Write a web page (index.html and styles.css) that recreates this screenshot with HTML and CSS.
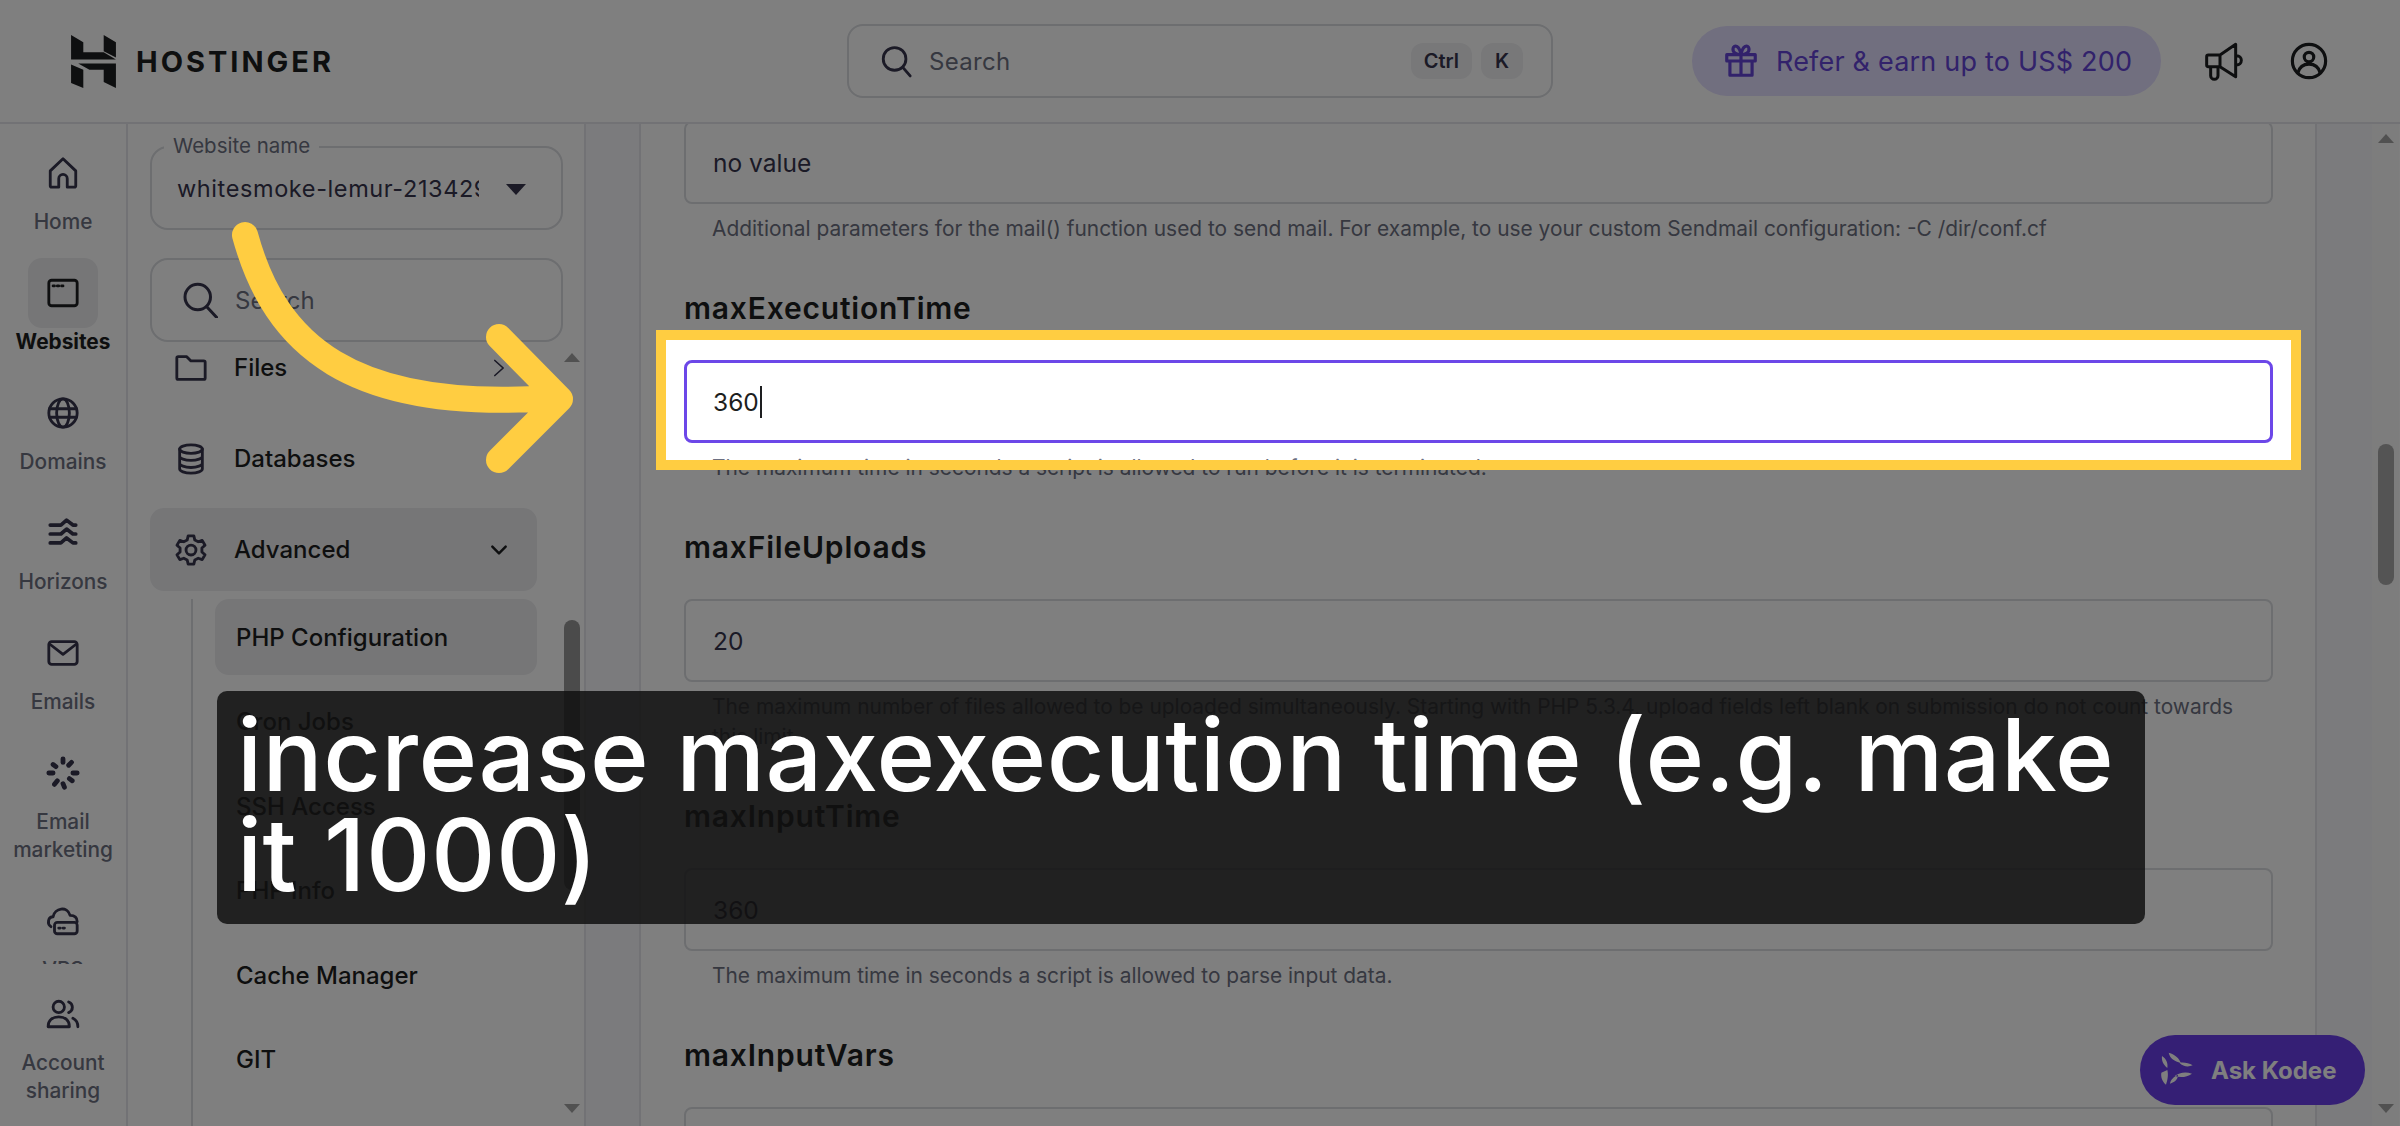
FILE: index.html
```html
<!DOCTYPE html>
<html lang="en">
<head>
<meta charset="utf-8">
<title>Hostinger PHP Configuration</title>
<link rel="stylesheet" href="styles.css">
</head>
<body>
<div class="page">
  <header class="topbar">
    <div class="brand">
      <svg class="brand-mark" viewBox="0 0 44 52"><path d="M0 0l12 7v10h20l12 7H0zM32 0l12 7v15l-12-6zM0 29l12 5v18L0 47zM7 28h37v24l-12-6V34H18z"/></svg>
      <span class="brand-name">HOSTINGER</span>
    </div>
    <div class="top-search">
      <svg class="i top-search-icon" viewBox="0 0 24 24"><circle cx="11" cy="10.500" r="8"/><path d="M16.800 16.500 22 22.500"/></svg>
      <span class="top-search-text">Search</span>
      <span class="key">Ctrl</span>
      <span class="key key-k">K</span>
    </div>
    <div class="refer">
      <svg class="i refer-icon" viewBox="0 0 24 24"><path d="M3 8h18v4H3zM5 12v9h14v-9M12 8v13M12 8C9 8 6.500 6.500 7 4s4-2 5 4c1-6 4.500-6.500 5-4s-2 4-5 4"/></svg>
      <span>Refer &amp; earn up to US$ 200</span>
    </div>
    <svg class="i top-megaphone" viewBox="0 0 180 156"><path d="M35 65a5 5 0 0 1 5-5H75L122 28V125L75 95H40a5 5 0 0 1-5-5zM75 60V95M47 95V122a11 11 0 0 0 22 0V95M125 62a14 14 0 0 1 0 28"/></svg>
    <svg class="i top-profile" viewBox="0 0 24 24"><circle cx="12" cy="12" r="10.500"/><circle cx="12" cy="9.500" r="3"/><path d="M5 19.500c1-4 4-5.500 7-5.500s6 1.500 7 5.500"/></svg>
  </header>

  <div class="workspace">
    <nav class="rail">
      <div class="rail-list">
        <div class="rail-item"><div class="rail-tile"><svg class="i" viewBox="0 0 24 24"><path d="M3 10.500 12 2l9 8.500V21a1 1 0 0 1-1 1h-5v-6a3 3 0 0 0-6 0v6H4a1 1 0 0 1-1-1z"/></svg></div><span>Home</span></div>
        <div class="rail-item active"><div class="rail-tile"><svg class="i" viewBox="0 0 24 24"><rect x="2" y="3" width="20" height="18" rx="2"/><path d="M5 7h1M8 7h1M11 7h1"/></svg></div><span>Websites</span></div>
        <div class="rail-item"><div class="rail-tile"><svg class="i" viewBox="0 0 24 24"><circle cx="12" cy="12" r="10"/><ellipse cx="12" cy="12" rx="4.500" ry="10"/><path d="M2.500 9h19M2.500 15h19"/></svg></div><span>Domains</span></div>
        <div class="rail-item"><div class="rail-tile"><svg class="i i-wave" viewBox="0 0 24 24"><path d="M3 6.400h7.500l4-3.500 4.500 3.500h2M3 12.700h7.500l4-3.500 4.500 3.500h2M3 19h7.500l4-3.500 4.500 3.500h2"/></svg></div><span>Horizons</span></div>
        <div class="rail-item"><div class="rail-tile"><svg class="i" viewBox="0 0 24 24"><rect x="2" y="4" width="20" height="16" rx="2"/><path d="m3 6 9 7 9-7"/></svg></div><span>Emails</span></div>
        <div class="rail-item"><div class="rail-tile"><svg class="i i-dash" viewBox="0 0 24 24"><path d="M12 2v2.500M18 4.500l-2 2M22 12h-3M18.500 17.500l-2-1.500M13 22l-1-2.500M6 20l2-2.500M2 12h3M5 6l2 1.500"/></svg></div><span>Email<br>marketing</span></div>
        <div class="rail-item"><div class="rail-tile"><svg class="i" viewBox="0 0 24 24"><path d="M3.500 16C.5 14 1.500 9 5 9c1-6 10-8 12-1 3 0 5 1.500 5 4.500"/><rect x="6" y="13" width="16" height="8" rx="2"/><path d="M9 17h1M12 17h1"/></svg></div><span>VPS</span></div>
      </div>
      <div class="rail-foot">
        <div class="rail-item"><div class="rail-tile"><svg class="i" viewBox="0 0 24 24"><circle cx="9" cy="7" r="4"/><path d="M1.500 21c0-5 3.500-7 7.500-7s7.500 2 7.500 7zM16 3.500a4 4 0 0 1 0 7.500M19 15c2 1 3.500 3 3.500 6"/></svg></div><span>Account<br>sharing</span></div>
      </div>
    </nav>

    <aside class="sidebar">
      <div class="side-field side-site">
        <span class="side-legend">Website name</span>
        <span class="side-site-value">whitesmoke-lemur-213429</span>
        <span class="caret-down"></span>
      </div>
      <div class="side-field side-search">
        <svg class="i side-search-icon" viewBox="0 0 24 24"><circle cx="10.500" cy="10" r="8.500"/><path d="M16.500 16.500 23 23.500"/></svg>
        <span>Search</span>
      </div>
      <div class="side-scroll">
        <div class="side-list">
          <div class="side-row"><svg class="i row-icon" viewBox="0 0 24 24"><path d="M2 5a1 1 0 0 1 1-1h6l3 3h9a1 1 0 0 1 1 1v11a1 1 0 0 1-1 1H3a1 1 0 0 1-1-1z"/></svg><span>Files</span><svg class="i row-chev" viewBox="0 0 24 24"><path d="m7 3 10 9-10 9"/></svg></div>
          <div class="side-row"><svg class="i row-icon" viewBox="0 0 24 24"><ellipse cx="12" cy="5" rx="8" ry="3"/><path d="M4 5v14c0 1.500 3.500 3 8 3s8-1.500 8-3V5M4 10c0 1.500 3.500 3 8 3s8-1.500 8-3M4 15c0 1.500 3.500 3 8 3s8-1.500 8-3"/></svg><span>Databases</span></div>
          <div class="side-row side-row-open"><svg class="i row-icon" viewBox="0 0 24 24"><circle cx="12" cy="12" r="3.500"/><path d="M10 2h4l.7 3 2.400 1.200 2.800-1 2 3.400-2.200 2v2.800l2.200 2-2 3.400-2.800-1-2.400 1.200-.7 3h-4l-.7-3-2.400-1.200-2.800 1-2-3.400 2.200-2v-2.800l-2.200-2 2-3.400 2.800 1L9.300 5z"/></svg><span>Advanced</span><svg class="i row-chev row-chev-open" viewBox="0 0 24 24"><path d="m4 8 8 8 8-8"/></svg></div>
          <div class="side-sub">
            <div class="sub-item sub-active">PHP Configuration</div>
            <div class="sub-item">Cron Jobs</div>
            <div class="sub-item">SSH Access</div>
            <div class="sub-item">PHP Info</div>
            <div class="sub-item">Cache Manager</div>
            <div class="sub-item">GIT</div>
          </div>
        </div>
        <div class="bar side-bar">
          <span class="arrow-up"></span>
          <span class="thumb side-thumb"></span>
          <span class="arrow-down"></span>
        </div>
      </div>
    </aside>

    <div class="gutter"></div>

    <main class="main">
      <div class="main-scroll">
        <section class="group group-first">
          <div class="field">no value</div>
          <p class="help">Additional parameters for the mail() function used to send mail. For example, to use your custom Sendmail configuration: -C /dir/conf.cf</p>
        </section>
        <section class="group">
          <h3 class="label">maxExecutionTime</h3>
          <div class="field field-focus">360<span class="text-caret"></span></div>
          <p class="help">The maximum time in seconds a script is allowed to run before it is terminated.</p>
        </section>
        <section class="group">
          <h3 class="label">maxFileUploads</h3>
          <div class="field">20</div>
          <p class="help">The maximum number of files allowed to be uploaded simultaneously. Starting with PHP 5.3.4, upload fields left blank on submission do not count towards this limit.</p>
        </section>
        <section class="group">
          <h3 class="label">maxInputTime</h3>
          <div class="field">360</div>
          <p class="help">The maximum time in seconds a script is allowed to parse input data.</p>
        </section>
        <section class="group">
          <h3 class="label">maxInputVars</h3>
          <div class="field"></div>
        </section>
      </div>
    </main>

    <div class="gutter gutter-right"></div>

    <div class="bar page-bar">
      <span class="arrow-up"></span>
      <span class="thumb page-thumb"></span>
      <span class="arrow-down"></span>
    </div>
  </div>

  <div class="kodee">
    <svg class="kodee-icon" viewBox="0 0 156 168"><path d="M50 32C70 38 82 50 86 62 68 58 54 50 50 32zM82 62C95 60 110 62 122 70 108 76 94 74 82 62zM120 95C100 88 82 92 68 102 86 108 104 106 120 95zM54 125C56 112 66 104 78 98 78 112 68 120 54 125zM30 42C44 52 48 64 46 78 34 68 28 56 30 42zM46 84C50 100 46 116 42 128 30 118 26 104 28 92z"/></svg>
    <span>Ask Kodee</span>
  </div>

  <div class="spotlight"></div>

  <svg class="pointer" viewBox="0 0 2400 1126"><path d="M245 235C275 345 350 412 552 398M499 337 560 399 499 460"/></svg>

  <div class="caption">increase maxexecution time (e.g. make it 1000)</div>
</div>
</body>
</html>
```

FILE: styles.css
```css
* { box-sizing: border-box; }
html, body { margin: 0; padding: 0; }
body { font-family: "Inter", "Noto Sans", sans-serif; color: #1d1e20; background: #fff; }

.page { position: relative; width: 2400px; height: 1126px; overflow: hidden; background: #fff; }

.i { fill: none; stroke: currentColor; stroke-width: 2; stroke-linecap: round; stroke-linejoin: round; display: block; }

/* top bar */
.topbar { height: 124px; display: flex; align-items: center; border-bottom: 2px solid #e4e5ea; background: #fff; }
.brand { display: flex; align-items: center; width: 847px; padding-left: 71px; gap: 20px; }
.brand-mark { width: 45px; height: 53px; fill: #1d1e20; flex: none; }
.brand-name { font-size: 29px; font-weight: 700; letter-spacing: 3px; line-height: 1; }
.top-search { width: 706px; height: 74px; border: 2px solid #dadce0; border-radius: 16px; display: flex; align-items: center; padding: 0 28px 0 30px; color: #6d7081; font-size: 24px; }
.top-search-icon { width: 34px; height: 34px; color: #36344d; margin-right: 16px; }
.top-search-text { flex: 1; letter-spacing: .3px; }
.key { height: 36px; padding: 0 13px; border-radius: 12px; background: #f0f0f3; display: flex; align-items: center; font-size: 20px; font-weight: 600; color: #36344d; margin-left: 9px; }
.key-k { padding: 0 14px; }
.refer { margin-left: 139px; width: 469px; height: 70px; border-radius: 35px; background: #e3deff; color: #6444d6; display: flex; align-items: center; padding-left: 29px; gap: 15px; font-size: 27px; letter-spacing: .2px; white-space: nowrap; }
.refer-icon { width: 40px; height: 38px; flex: none; }
.top-megaphone { width: 60px; height: 52px; margin-left: 34px; stroke-width: 9; color: #1d1e20; flex: none; }
.top-profile { width: 38px; height: 38px; margin-left: 35px; color: #1d1e20; flex: none; }

/* workspace */
.workspace { display: flex; height: 1002px; }

.rail { width: 128px; flex: none; border-right: 2px solid #e4e5ea; display: flex; flex-direction: column; background: #fff; }
.rail-list { height: 840px; overflow: hidden; padding-top: 14px; flex: none; }
.rail-foot { padding-top: 15px; }
.rail-item { display: flex; flex-direction: column; align-items: center; text-align: center; margin-bottom: 22px; font-size: 20.800px; line-height: 28px; font-weight: 500; color: #6d7081; }
.rail-tile { width: 70px; height: 70px; border-radius: 14px; display: flex; align-items: center; justify-content: center; color: #36344d; }
.rail-tile .i { width: 34px; height: 34px; }
.rail-tile .i-wave { stroke-width: 2.600; }
.rail-tile .i-dash { stroke-width: 3.400; }
.rail-item.active { color: #1d1e20; font-weight: 700; }
.rail-item.active .rail-tile { background: #ececef; color: #1d1e20; }

.sidebar { width: 458px; flex: none; border-right: 2px solid #e4e5ea; padding-top: 22px; padding-left: 22px; display: flex; flex-direction: column; background: #fff; }
.side-field { width: 413px; height: 84px; flex: none; border: 2px solid #dadce0; border-radius: 18px; display: flex; align-items: center; position: relative; }
.side-legend { position: absolute; left: 12px; top: -14px; background: #fff; padding: 0 9px; font-size: 20.500px; line-height: 24px; color: #6d7081; }
.side-site { padding-left: 25px; font-size: 23.500px; color: #36344d; margin-bottom: 28px; }
.side-site-value { width: 302px; overflow: hidden; white-space: nowrap; letter-spacing: .6px; }
.caret-down { position: absolute; left: 354px; top: 36px; border-left: 10px solid transparent; border-right: 10px solid transparent; border-top: 11px solid #36344d; }
.side-search { padding-left: 30px; font-size: 24px; color: #6d7081; gap: 17px; }
.side-search-icon { width: 36px; height: 36px; color: #36344d; }

.side-scroll { flex: 1; display: flex; min-height: 0; }
.side-list { width: 387px; flex: none; margin-top: -16px; display: flex; flex-direction: column; }
.side-row { height: 83px; flex: none; margin-bottom: 8px; border-radius: 14px; display: flex; align-items: center; padding: 0 26px 0 22px; gap: 24px; font-size: 24px; font-weight: 500; color: #1d1e20; }
.side-row-open { background: #ececef; }
.row-icon { width: 38px; height: 34px; flex: none; color: #36344d; }
.row-chev { width: 24px; height: 20px; margin-left: auto; color: #36344d; }
.row-chev-open { stroke-width: 3; color: #1d1e20; }
.side-sub { flex: 1; margin-left: 41px; border-left: 2px solid #dadce0; padding-left: 22px; display: flex; flex-direction: column; gap: 8.500px; }
.sub-item { height: 76px; border-radius: 14px; display: flex; align-items: center; padding-left: 21px; font-size: 24px; font-weight: 500; color: #1d1e20; flex: none; }
.sub-active { background: #ececef; }

.bar { display: flex; flex-direction: column; align-items: center; }
.arrow-up { border-left: 8px solid transparent; border-right: 8px solid transparent; border-bottom: 9px solid #a3a3a3; flex: none; }
.arrow-down { border-left: 8px solid transparent; border-right: 8px solid transparent; border-top: 9px solid #a3a3a3; flex: none; margin-top: auto; }
.thumb { display: block; width: 16px; border-radius: 8px; flex: none; background: #969696; }
.side-bar { width: 16px; margin-left: 27px; padding: 11px 0 13px; }
.side-thumb { height: 270px; margin-top: 258px; }

.gutter { width: 55px; flex: none; background: #f6f7fa; border-right: 2px solid #e4e5ea; }
.gutter-right { width: 57px; border-right: 0; border-left: 2px solid #e4e5ea; }

.main { width: 1674px; flex: none; overflow: hidden; background: #fff; }
.main-scroll { padding: 0 42px 0 43px; margin-top: -3px; }
.group { margin-bottom: 44px; }
.label { margin: 0 0 32px; font-size: 30px; line-height: 40px; font-weight: 600; letter-spacing: .8px; color: #1d1e20; }
.field { height: 83px; border: 2px solid #dadce0; border-radius: 8px; padding-left: 27px; display: flex; align-items: center; font-size: 24.500px; color: #36344d; }
.field-focus { border: 3px solid #6c47e8; padding-left: 26px; color: #1d1e20; background: #fff; }
.text-caret { width: 2px; height: 32px; background: #1d1e20; margin-left: 1px; }
.help { margin: 10px 0 0; padding: 0 20px 0 28px; font-size: 20.900px; line-height: 30px; color: #6d7081; }

.kodee { position: absolute; left: 2140px; top: 1035px; width: 225px; height: 70px; border-radius: 35px; background: #6a3eea; color: #fff; display: flex; align-items: center; padding-left: 12px; gap: 7px; font-size: 24px; font-weight: 700; }
.kodee-icon { width: 52px; height: 56px; fill: #fff; flex: none; }

.page-bar { width: 27px; flex: none; padding: 10px 0 13px; background: #fafafa; }
.page-thumb { height: 141px; margin-top: 301px; background: #a8a8a8; }

.spotlight { position: absolute; left: 656px; top: 330px; width: 1645px; height: 140px; border: 10px solid #ffcd41; box-shadow: 0 0 0 3000px rgba(0, 0, 0, .5); }

.pointer { position: absolute; left: 0; top: 0; width: 2400px; height: 1126px; fill: none; stroke: #ffcd41; stroke-width: 26px; stroke-linecap: round; stroke-linejoin: round; }

.caption { position: absolute; left: 217px; top: 691px; width: 1928px; height: 233px; border-radius: 10px; background: rgba(16, 16, 16, .85); color: #fff; padding: 14px 20px; font-size: 100px; font-weight: 500; line-height: 100px; letter-spacing: .4px; }
```
